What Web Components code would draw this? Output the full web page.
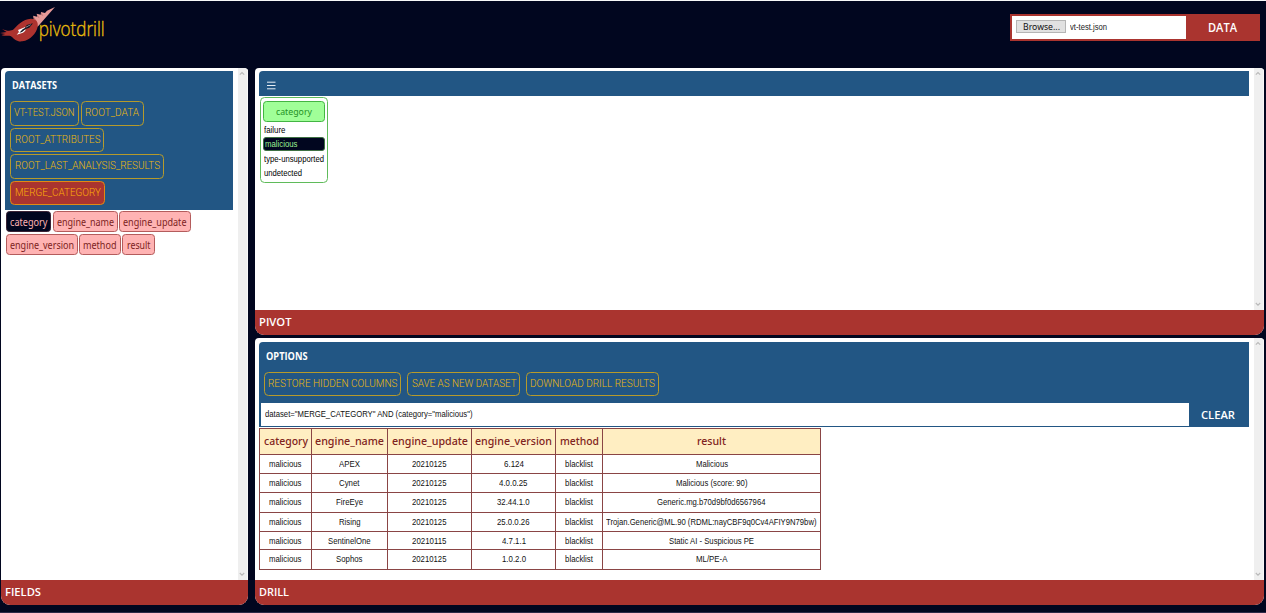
<!DOCTYPE html>
<html lang="en">
<head>
<meta charset="utf-8">
<title>pivotdrill</title>
<style>
html,body{margin:0;height:100%;overflow:hidden;background:#01061f}
</style>
</head>
<body>
<pd-app></pd-app>
<script>
const define = (name, html, init) => {
  const tpl = document.createElement('template');
  tpl.innerHTML = html;
  customElements.define(name, class extends HTMLElement {
    constructor() {
      super();
      this.attachShadow({mode: 'open'}).append(tpl.content.cloneNode(true));
    }
    connectedCallback() { if (init) init.call(this, this.shadowRoot); }
  });
};

/* Text condensed or widened to a given width. */
define('fit-text', `<style>:host{display:inline-block;white-space:nowrap;text-align:left}span{display:inline-block;transform-origin:0 50%}</style><span><slot></slot></span>`,
function (root) {
  const w = +this.getAttribute('w'), s = root.querySelector('span');
  s.style.transform = 'scaleX(' + w / s.getBoundingClientRect().width + ')';
  this.style.width = w + 'px';
});

define('pd-logo', `<style>:host{display:block;width:130px;height:60px}svg{display:block}text{font:300 19.6px "Open Sans","Noto Sans",sans-serif;fill:#e9bc0c;stroke:#e9bc0c;stroke-width:.35}</style>
<svg width="130" height="60" viewBox="0 0 130 60">
<g transform="scale(.33333)">
<path fill="#e79a98" d="M165 21 L113 80 L88 57 L102 57 L99 47 L112 50 L110 41 L122 44 L123 36 L135 39 L141 32Z"/>
<path fill="#b5716f" d="M101 56 L109 62 L100 48Z M112 50 L119 55 L111 42Z M124 45 L130 48 L123 37Z"/>
<path fill="#ad332f" d="M92 56 C106 55 116 64 113 80 C109 100 91 120 67 124 C51 126 43 117 35 110 C26 105 15 110 4 105 L16 102 L0 99 L20 96 L6 87 C22 94 33 94 41 88 C52 75 69 58 92 56Z"/>
<path fill="#fff" d="M54 90 L76 81 L76 92 L69 98 L50 104 L57 96Z"/>
<path fill="#141521" d="M58 98 L68 88 L75 84 L80 75 L99 70 L88 83 L77 87 L66 96Z"/>
<path fill="#ece9e9" d="M78 80 L93 73 L92 75 L77 83Z" opacity=".7"/>
</g>
<text x="38.7" y="36.4" textLength="66" lengthAdjust="spacingAndGlyphs">pivotdrill</text>
</svg>`);

define('pd-file', `<style>
:host{display:flex;box-sizing:border-box;width:250px;height:27px;background:#aa342f;padding:2px 0 2px 2px;font:9px "Liberation Sans",Arial,sans-serif;color:#222}
.in{box-sizing:border-box;width:174px;background:#fff;padding:4px 0 0 4px;display:flex;align-items:flex-start}
.b{box-sizing:border-box;width:50px;height:13px;border:1px solid #b5b5b5;background:#e1e1e1;font:9.5px/11px "Noto Sans","Open Sans",sans-serif;color:#111;padding-left:6px;margin-right:4px}
.n{line-height:14px}
.d{flex:1;text-align:center;color:#fff;font:600 11.6px/24px "Open Sans",sans-serif;padding-right:2px}
</style><div class="in"><div class="b"><fit-text w="37">Browse...</fit-text></div><fit-text class="n" w="37">vt-test.json</fit-text></div><div class="d"><fit-text w="29">DATA</fit-text></div>`);

define('pd-panel', `<style>
:host{display:flex;flex-direction:column;box-sizing:border-box;background:#fff;border-radius:4px 4px 9px 9px;overflow:hidden;min-height:0}
.body{flex:1;display:flex;min-height:0}
.main{flex:1;min-width:0;padding:3px 4.6px 0 4px}
:host([tall]) .main{padding-top:4px}
.bar{width:10.5px;box-sizing:border-box;background:#efefef;display:flex;flex-direction:column;justify-content:space-between;align-items:center;padding:3px 0 3px;border-right:1px solid #f8f8f8}
.foot{height:25.5px;background:#aa342f;color:#fff;font:600 11.3px/24px "Open Sans",sans-serif;padding-left:4px}
svg{display:block;fill:none;stroke:#b9b9b9;stroke-width:1.1}
</style>
<div class="body"><div class="main"><slot></slot></div><div class="bar"><svg width="6" height="5"><path d="M.8 3.7L3 1.5L5.2 3.7"/></svg><svg width="6" height="5"><path d="M.8 1L3 3.2L5.2 1"/></svg></div></div>
<div class="foot"><slot name="foot"></slot></div>`);

define('pd-chip', `<style>
:host{display:block;box-sizing:border-box;height:24.5px;border:1px solid #b69a2b;border-radius:4.5px;color:#ecb90c;font:300 10.9px/22px Roboto,sans-serif;text-align:center;white-space:nowrap}
:host([on]){background:#aa342f;border-color:#e08a14;color:#fcae08}
:host([field]){height:21.5px;border-color:#b45c5c;background:#ffb3b3;color:#7c1f22;font:10px/21px "Noto Sans","Open Sans",sans-serif;border-radius:3.5px}
:host([field][on]){background:#01061f;border-color:#3b2335;color:#ffb3b3}
</style><slot></slot>`, function () { this.style.width = this.getAttribute('w') + 'px'; });

define('pd-fields', `<style>
:host{display:block}
.blue{box-sizing:border-box;width:228px;height:139px;background:#225684;border-radius:4px 0 0 0;padding:4.5px 0 0 5.4px}
h2{margin:0 0 6.6px 2px;color:#fff;font:700 9.9px/19px "Open Sans",sans-serif}
.r{display:flex;gap:2px;height:26.6px}
.f{display:flex;gap:1.7px;height:23px;margin-left:1px;position:relative;top:.6px}
</style>
<div class="blue"><h2><fit-text w="45">DATASETS</fit-text></h2>
<div class="r"><pd-chip w="68.5"><fit-text w="60.5">VT-TEST.JSON</fit-text></pd-chip><pd-chip w="63"><fit-text w="54">ROOT_DATA</fit-text></pd-chip></div>
<div class="r"><pd-chip w="94"><fit-text w="85.5">ROOT_ATTRIBUTES</fit-text></pd-chip></div>
<div class="r"><pd-chip w="154"><fit-text w="145">ROOT_LAST_ANALYSIS_RESULTS</fit-text></pd-chip></div>
<div class="r"><pd-chip w="94.5" on><fit-text w="86">MERGE_CATEGORY</fit-text></pd-chip></div></div>
<div class="f"><pd-chip field on w="45"><fit-text w="37.5">category</fit-text></pd-chip><pd-chip field w="65"><fit-text w="57">engine_name</fit-text></pd-chip><pd-chip field w="71.5"><fit-text w="63.5">engine_update</fit-text></pd-chip></div>
<div class="f"><pd-chip field w="71.8"><fit-text w="64">engine_version</fit-text></pd-chip><pd-chip field w="41.3"><fit-text w="33.5">method</fit-text></pd-chip><pd-chip field w="32.5"><fit-text w="23.5">result</fit-text></pd-chip></div>`);

define('pd-pivot', `<style>
:host{display:block}
.blue{height:25px;background:#225684;border-radius:4px 0 0 0;display:flex;align-items:flex-start;padding:10px 0 0 8px;box-sizing:border-box}
.card{box-sizing:border-box;width:68px;height:86px;border:1px solid #5fbb5a;border-radius:4.5px;margin:1px 0 0 1px;padding:2.5px 2px;font:8.7px/14px "Liberation Sans",Arial,sans-serif;color:#000}
.h{box-sizing:border-box;width:62px;height:21.5px;border:1px solid #43b543;background:#a0ff98;border-radius:3.5px;color:#259225;text-align:center;font:9.7px/20px "Noto Sans",sans-serif;margin-bottom:.5px}
.i{height:14px;padding-left:.6px}
.on{box-sizing:border-box;width:61.5px;height:14px;background:#01061f;border:1px solid #3e7043;border-radius:3px;color:#9cef91;line-height:13px;margin:0 0 1px;padding-left:.6px}
fit-text{display:block}
.h fit-text{display:inline-block}
</style>
<div class="blue"><svg width="9" height="9"><path d="M0 1.2H8.5M0 4.5H8.5M0 7.8H8.5" stroke="#e6edf4" stroke-width="1"/></svg></div>
<div class="card"><div class="h"><fit-text w="36">category</fit-text></div>
<div class="i"><fit-text w="21.5">failure</fit-text></div><div class="on"><fit-text w="32.5">malicious</fit-text></div><div class="i"><fit-text w="60">type-unsupported</fit-text></div><div class="i"><fit-text w="38">undetected</fit-text></div></div>`);

const heads = [['category',44],['engine_name',69],['engine_update',76],['engine_version',77],['method',39],['result',29]];
const rows = [
  [['APEX',21],['20210125',34.5],['6.124',20],['Malicious',32]],
  [['Cynet',20.5],['20210125',34.5],['4.0.0.25',28.5],['Malicious (score: 90)',71.5]],
  [['FireEye',27],['20210125',34.5],['32.44.1.0',32.5],['Generic.mg.b70d9bf0d6567964',108.5]],
  [['Rising',21.5],['20210125',34.5],['25.0.0.26',32.5],['Trojan.Generic@ML.90 (RDML:nayCBF9q0Cv4AFIY9N79bw)',210.5]],
  [['SentinelOne',42.5],['20210115',34.5],['4.7.1.1',24],['Static AI - Suspicious PE',85]],
  [['Sophos',26.5],['20210125',34.5],['1.0.2.0',24],['ML/PE-A',31.5]]
].map(r => [['malicious',32.5], r[0], r[1], r[2], ['blacklist',28], r[3]]);
const fit = ([t, w]) => `<div><fit-text w="${w}">${t}</fit-text></div>`;

define('pd-table', `<style>
:host{display:grid;box-sizing:border-box;width:562px;height:142px;grid-template-columns:52px 76px 84px 84px 47px 218px;grid-template-rows:26px 19px 19px 20px 19px 18px 20px;border:1px solid #8a4545;border-width:1px 0 0 1px;color:#111;font:8.8px/19px "Liberation Sans",Arial,sans-serif;text-align:center;margin-top:1px}
div{box-sizing:border-box;border:1px solid #8a4545;border-width:0 1px 1px 0;white-space:nowrap}
div:nth-child(-n+7){background:#ffeec2;color:#7f2420;font:500 11.3px/24px "Noto Sans","Open Sans",sans-serif}
</style>${heads.map(fit).join('')}${rows.map(r => r.map(fit).join('')).join('')}`);

define('pd-drill', `<style>
:host{display:block}
.blue{box-sizing:border-box;height:85px;background:#225684;border-radius:4px 0 0 0;padding:4.5px 0 0 2px}
h2{margin:0 0 6px 5px;color:#fff;font:700 9.9px/19px "Open Sans",sans-serif}
.r{display:flex;gap:6px;height:31px;padding-left:3px}
.q{display:flex}
.in{width:928.3px;height:23px;box-sizing:border-box;background:#fff;color:#111;font:8.8px/22px "Liberation Sans",Arial,sans-serif;padding-left:3.5px}
.c{flex:1;text-align:center;color:#fff;font:600 11px/24px "Open Sans",sans-serif;padding-right:2px}
</style>
<div class="blue"><h2><fit-text w="41.5">OPTIONS</fit-text></h2>
<div class="r"><pd-chip w="137.3"><fit-text w="129.5">RESTORE HIDDEN COLUMNS</fit-text></pd-chip><pd-chip w="113"><fit-text w="104.5">SAVE AS NEW DATASET</fit-text></pd-chip><pd-chip w="133"><fit-text w="125">DOWNLOAD DRILL RESULTS</fit-text></pd-chip></div>
<div class="q"><div class="in"><fit-text w="207.5">dataset="MERGE_CATEGORY" AND (category="malicious")</fit-text></div><div class="c"><fit-text w="34">CLEAR</fit-text></div></div></div>
<pd-table></pd-table>`);

define('pd-app', `<style>
:host{display:flex;flex-direction:column;box-sizing:border-box;width:1266px;height:613px;background:#01061f;border-top:1px solid #f7f8f8;border-bottom:1px solid #2b2948}
header{display:flex;justify-content:space-between;height:67px;margin-top:-1px;padding-right:6px}
pd-file{margin-top:14px}
main{display:grid;grid-template-columns:247px 1009px;grid-template-rows:267px 267px;column-gap:7px;row-gap:3px;padding:1px 0 0 1px}
.l{grid-row:1/3}
</style>
<header><pd-logo></pd-logo><pd-file></pd-file></header>
<main><pd-panel class="l"><pd-fields></pd-fields><fit-text slot="foot" w="36">FIELDS</fit-text></pd-panel>
<pd-panel><pd-pivot></pd-pivot><fit-text slot="foot" w="32.5">PIVOT</fit-text></pd-panel>
<pd-panel tall><pd-drill></pd-drill><fit-text slot="foot" w="30">DRILL</fit-text></pd-panel></main>`);
</script>
</body>
</html>
